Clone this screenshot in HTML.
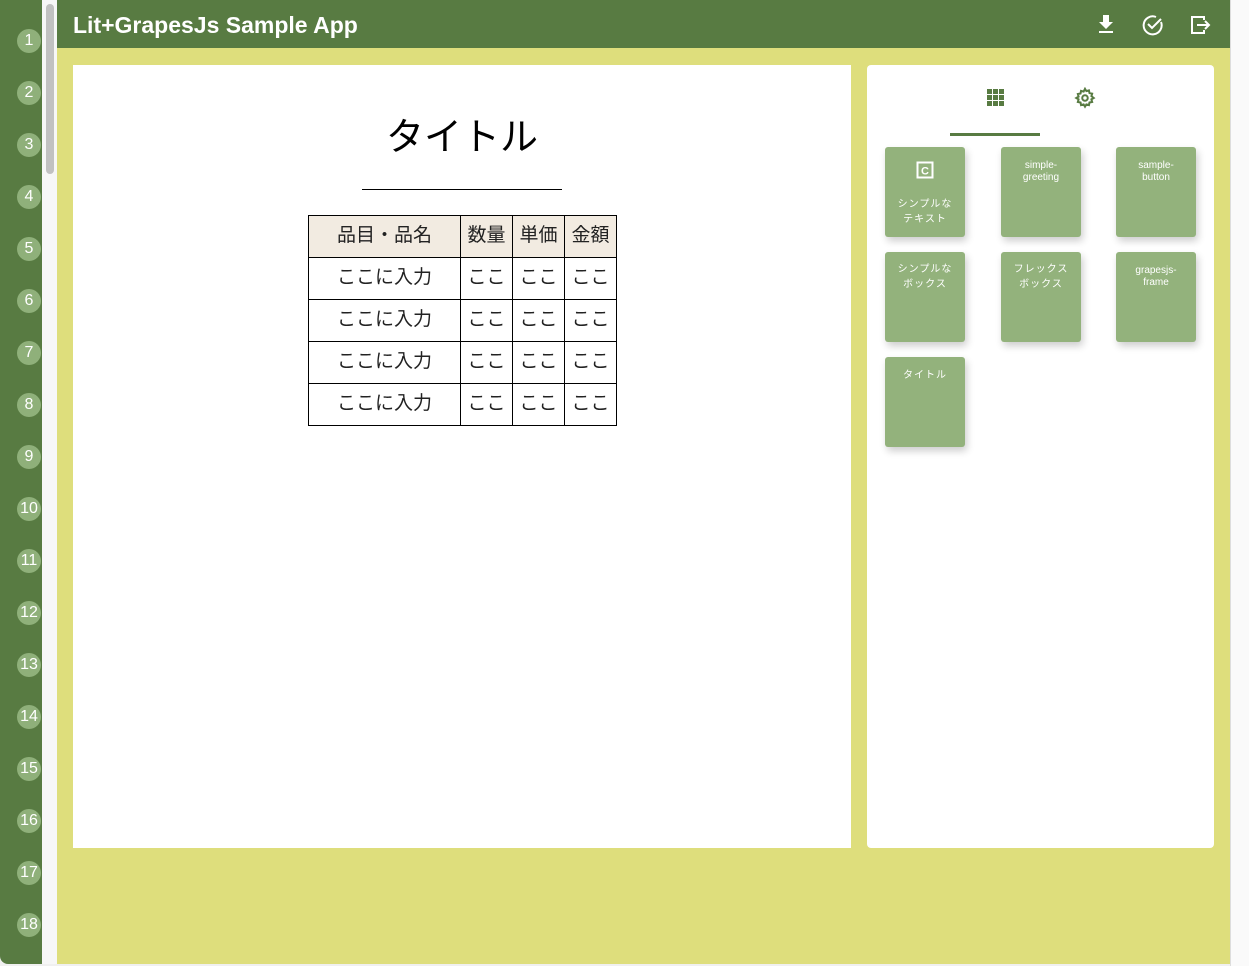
<!DOCTYPE html>
<html><head><meta charset="utf-8"><style>
*{box-sizing:border-box;margin:0;padding:0}
body{width:1249px;height:966px;overflow:hidden;background:#f0f0f0;font-family:"Liberation Sans","Noto Sans CJK JP",sans-serif;position:relative}
.gut{position:absolute;left:0;top:0;width:42px;height:964px;background:#587b42;border-radius:0 0 0 8px}
.num{position:absolute;left:17px;width:24px;height:24px;border-radius:50%;background:#8fb07a;color:#fff;font-size:16px;text-align:center;line-height:24px}
.track{position:absolute;left:42px;top:0;width:15px;height:964px;background:#f7f7f7}
.thumb{position:absolute;left:46px;top:4px;width:8px;height:170px;border-radius:4px;background:#c1c1c1}
.main{position:absolute;left:57px;top:0;width:1173px;height:964px;background:#dede7c}
.hdr{position:absolute;left:0;top:0;width:1173px;height:48px;background:#587b42;color:#fff;font-weight:bold;font-size:23px;padding:12px 0 0 16px}
.rs{position:absolute;left:1230px;top:0;width:19px;height:966px;background:#fafafa;border-left:1px solid #ddd}
.canvas{position:absolute;left:16px;top:65px;width:778px;height:783px;background:#fff}
.panel{position:absolute;left:810px;top:65px;width:347px;height:783px;background:#fff;border-radius:4px}
h1{position:absolute;left:0;width:778px;top:41px;text-align:center;font-size:38px;font-weight:normal;color:#000}
.hr{position:absolute;left:289px;top:124px;width:200px;height:1px;background:#000}
table{position:absolute;left:235px;top:150px;border-collapse:collapse}
td,th{border:1.5px solid #000;height:42px;text-align:center;font-size:19px;color:#222;padding:0 0 2px 0;line-height:20px}
th{background:#f2ebe1;font-weight:normal}
.blk{position:absolute;width:80px;height:90px;background:#93b27c;border-radius:3px;box-shadow:2px 4px 8px rgba(0,0,0,.2);color:#fff;font-size:10px;text-align:center;padding-top:12px;line-height:12px}
.jp{font-size:10px;line-height:15px;letter-spacing:1px}
</style></head><body>
<div class="gut"></div>
<div class="num" style="top:29px">1</div><div class="num" style="top:81px">2</div><div class="num" style="top:133px">3</div><div class="num" style="top:185px">4</div><div class="num" style="top:237px">5</div><div class="num" style="top:289px">6</div><div class="num" style="top:341px">7</div><div class="num" style="top:393px">8</div><div class="num" style="top:445px">9</div><div class="num" style="top:497px">10</div><div class="num" style="top:549px">11</div><div class="num" style="top:601px">12</div><div class="num" style="top:653px">13</div><div class="num" style="top:705px">14</div><div class="num" style="top:757px">15</div><div class="num" style="top:809px">16</div><div class="num" style="top:861px">17</div><div class="num" style="top:913px">18</div>
<div class="track"></div><div class="thumb"></div>
<div class="main">
<div class="hdr">Lit+GrapesJs Sample App
<svg style="position:absolute;left:1040px;top:14px" width="18" height="20" viewBox="0 0 18 20"><path d="M6 1h6v7h4l-7 7-7-7h4z M2 17h14v2H2z" fill="#fff"/></svg>
<svg style="position:absolute;left:1085px;top:14px" width="22" height="22" viewBox="0 0 22 22" fill="none" stroke="#fff" stroke-width="2"><path d="M19 8A9 9 0 1 1 14 3"/><path d="M6 10l4 4 9-9"/></svg>
<svg style="position:absolute;left:1134px;top:15px" width="20" height="20" viewBox="0 0 20 20" fill="none" stroke="#fff" stroke-width="2"><path d="M13 5V2H1v16h12v-3 M6 10h12 M14 6l4 4-4 4"/></svg>
</div>
<div class="canvas">
<h1>タイトル</h1><div class="hr"></div>
<table>
<tr><th style="width:152px">品目・品名</th><th style="width:52px">数量</th><th style="width:52px">単価</th><th style="width:52px">金額</th></tr>
<tr><td>ここに入力</td><td>ここ</td><td>ここ</td><td>ここ</td></tr>
<tr><td>ここに入力</td><td>ここ</td><td>ここ</td><td>ここ</td></tr>
<tr><td>ここに入力</td><td>ここ</td><td>ここ</td><td>ここ</td></tr>
<tr><td>ここに入力</td><td>ここ</td><td>ここ</td><td>ここ</td></tr>
</table>
</div>
<div class="panel">
<svg style="position:absolute;left:120px;top:24px" width="17" height="17" viewBox="0 0 17 17" fill="#587b42"><rect x="0" y="0" width="5" height="5"/><rect x="6" y="0" width="5" height="5"/><rect x="12" y="0" width="5" height="5"/><rect x="0" y="6" width="5" height="5"/><rect x="6" y="6" width="5" height="5"/><rect x="12" y="6" width="5" height="5"/><rect x="0" y="12" width="5" height="5"/><rect x="6" y="12" width="5" height="5"/><rect x="12" y="12" width="5" height="5"/></svg>
<svg style="position:absolute;left:207px;top:22px" width="22" height="22" viewBox="0 0 24 24" fill="none" stroke="#587b42" stroke-width="2.2"><circle cx="12" cy="12" r="3"/><path d="M12 2l1.5 2.5 2.8-.8.6 2.9 2.9.6-.8 2.8L21.5 12l-2.5 1.5.8 2.8-2.9.6-.6 2.9-2.8-.8L12 21.5l-1.5-2.5-2.8.8-.6-2.9-2.9-.6.8-2.8L2.5 12 5 10.5l-.8-2.8 2.9-.6.6-2.9 2.8.8z"/></svg>
<div style="position:absolute;left:83px;top:68px;width:90px;height:3px;background:#587b42"></div>
</div>
<div class="blk" style="left:828px;top:147px"><svg width="18" height="18" viewBox="0 0 18 18" style="display:block;margin:2px auto 18px"><rect x="1.5" y="1.5" width="15" height="15" fill="none" stroke="#fff" stroke-width="2"/><text x="9" y="13.5" font-size="11" font-weight="bold" fill="#fff" text-anchor="middle" font-family="Liberation Sans">C</text></svg><div class="jp">シンプルな<br>テキスト</div></div>
<div class="blk" style="left:944px;top:147px;padding-top:13px">simple-<br>greeting</div>
<div class="blk" style="left:1059px;top:147px;padding-top:13px">sample-<br>button</div>
<div class="blk jp" style="left:828px;top:252px;padding-top:10px">シンプルな<br>ボックス</div>
<div class="blk jp" style="left:944px;top:252px;padding-top:10px">フレックス<br>ボックス</div>
<div class="blk" style="left:1059px;top:252px;padding-top:13px">grapesjs-<br>frame</div>
<div class="blk jp" style="left:828px;top:357px;padding-top:11px">タイトル</div>
</div>
<div class="rs"></div>
</body></html>
